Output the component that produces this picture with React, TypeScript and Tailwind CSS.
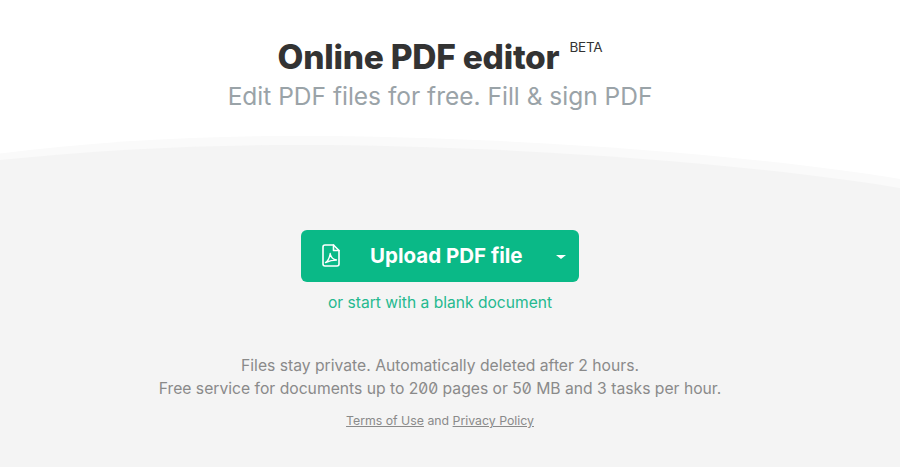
const font = { fontFamily: "Inter, sans-serif" };

function PdfIcon() {
  return (
    <svg className="-mt-[2px]" width="18" height="23" viewBox="0 0 18 23" fill="none" stroke="white" strokeWidth="1.600" strokeLinejoin="round" strokeLinecap="round">
      <path d="M3 1h8.500l5.500 5.500v13.500a2 2 0 0 1-2 2h-12a2 2 0 0 1-2-2v-17a2 2 0 0 1 2-2z" />
      <path d="M11.500 1v5.500h5.500" />
      <path d="M3.500 18.500c2.500-1.500 4-4.500 4.700-9 .6 3.500 2.800 6 6.300 6.500-4 0-7.500 1-11 2.500z" strokeWidth="1.400" />
    </svg>
  );
}

export default function App() {
  return (
    <div className="h-[467px] overflow-hidden bg-white" style={font}>
      <header className="pt-[36px] pr-[20px] text-center">
        <h1 className="flex justify-center text-[33.5px] leading-[42px] font-extrabold tracking-[-0.25px] text-[#333333]">
          <span>Online PDF editor</span>
          <sup className="top-0 mt-[6px] ml-[10px] h-[11px] w-[33px] text-left text-[13.5px] leading-[11px] font-normal tracking-[-0.2px]">BETA</sup>
        </h1>
        <p className="text-[24.5px] leading-[37px] text-[#9aa3a8]">Edit PDF files for free. Fill &amp; sign PDF</p>
      </header>
      <svg className="mt-[21px] block" width="900" height="55" viewBox="0 0 900 55">
        <path d="M0 17.500C100 5 200 0 300 0C500 0 750 18 900 43V55H0Z" fill="#fafafa" />
        <path d="M0 24C100 14 200 9 300 9C500 9 750 27 900 52V55H0Z" fill="#f4f4f4" />
      </svg>
      <main className="flex h-[276px] flex-col items-center bg-[#f4f4f4] pr-[20px]">
        <button className="mt-[39px] flex h-[52px] w-[278px] items-center rounded-[6px] bg-[#0ab987] pl-[21px] text-white">
          <PdfIcon />
          <span className="ml-[30px] text-[20.5px] font-bold">Upload PDF file</span>
          <span className="mt-[2px] ml-[33px] h-0 w-0 border-x-[5px] border-t-[4px] border-x-transparent border-t-white" />
        </button>
        <a className="mt-[11px] text-[15.6px] leading-[20px] text-[#25b98f]">or start with a blank document</a>
        <p className="mt-[41px] text-center text-[15.7px] leading-[23px] text-[#8a8a8a] slashed-zero">
          Files stay private. Automatically deleted after 2 hours.
          <br />
          Free service for documents up to 200 pages or 50 MB and 3 tasks per hour.
        </p>
        <p className="mt-[11px] text-[12.3px] leading-[20px] text-[#8a8a8a]">
          <a className="underline">Terms of Use</a> and <a className="underline">Privacy Policy</a>
        </p>
      </main>
    </div>
  );
}
